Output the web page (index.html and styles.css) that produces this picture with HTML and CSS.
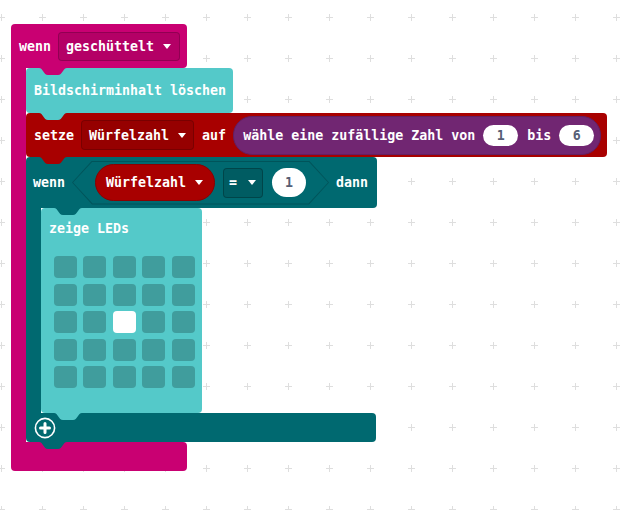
FILE: index.html
```html
<!DOCTYPE html>
<html lang="de">
<head>
    <meta charset="UTF-8">
    <meta name="viewport" content="width=device-width, initial-scale=1.0">
    <title>Würfel</title>
    <link rel="stylesheet" href="styles.css">
</head>
<body>
    <div class="workspace">
        <div class="c-block event">
            <div class="c-head">
                <span class="label">wenn</span>
                <span class="dropdown">geschüttelt<i class="arrow"></i></span>
            </div>
            <div class="c-body">
                <div class="c-arm"></div>
                <div class="stack">
                    <div class="stmt basic">
                        <span class="label">Bildschirminhalt löschen</span>
                    </div>

                    <div class="stmt variables">
                        <span class="label">setze</span>
                        <span class="dropdown">Würfelzahl<i class="arrow"></i></span>
                        <span class="label">auf</span>
                        <div class="reporter math">
                            <span class="label">wähle eine zufällige Zahl von</span>
                            <span class="num">1</span>
                            <span class="label">bis</span>
                            <span class="num">6</span>
                        </div>
                    </div>

                    <div class="stmt c-block logic">
                        <div class="c-head">
                            <span class="label">wenn</span>
                            <div class="hex">
                                <div class="hex-inner">
                                    <span class="var-pill">Würfelzahl<i class="arrow"></i></span>
                                    <span class="dropdown op">=<i class="arrow"></i></span>
                                    <span class="num big">1</span>
                                </div>
                            </div>
                            <span class="label">dann</span>
                        </div>
                        <div class="c-body">
                            <div class="c-arm"></div>
                            <div class="stack">
                                <div class="stmt basic leds-block">
                                    <span class="label">zeige LEDs</span>
                                    <div class="leds">
                                        <span></span><span></span><span></span><span></span><span></span>
                                        <span></span><span></span><span></span><span></span><span></span>
                                        <span></span><span></span><span class="on"></span><span></span><span></span>
                                        <span></span><span></span><span></span><span></span><span></span>
                                        <span></span><span></span><span></span><span></span><span></span>
                                    </div>
                                </div>
                            </div>
                        </div>
                        <div class="c-foot">
                            <svg class="plus" width="22" height="22" viewBox="0 0 22 22">
                                <circle cx="11" cy="11" r="9.6" fill="none" stroke="#fff" stroke-width="1.6"/>
                                <path d="M11 6.5v9M6.5 11h9" stroke="#fff" stroke-width="3" stroke-linecap="round"/>
                            </svg>
                        </div>
                    </div>
                </div>
            </div>
            <div class="c-foot"></div>
        </div>
    </div>
</body>
</html>
```

FILE: styles.css
```css
body {
    margin: 0;
    min-height: 100vh;
    background-color: #fff;
    background-image: url("data:image/svg+xml,%3Csvg xmlns='http://www.w3.org/2000/svg' width='41' height='41'%3E%3Cpath d='M0 3.5h7M3.5 0v7' stroke='%23dedede'/%3E%3C/svg%3E");
    background-position: -2px 14px;
    font-family: "DejaVu Sans Mono", "Liberation Mono", monospace;
    font-size: 13.3px;
    font-weight: bold;
    color: #fff;
}

.workspace {
    padding: 24px 0 0 11px;
}

.label {
    white-space: nowrap;
}

/* block colours */
.event { --c: #c90072; }
.basic { --c: #54c9c9; }
.variables { --c: #a80000; }
.logic { --c: #006970; }
.math { --c: #712672; }

/* C-shaped blocks */
.c-block {
    display: flex;
    flex-direction: column;
    align-items: flex-start;
}

.c-head {
    position: relative;
    display: flex;
    align-items: center;
    gap: 7px;
    padding: 0 7px 0 8px;
    background-color: var(--c);
    border-radius: 4px 4px 4px 0;
}

.c-head::after {
    content: "";
    position: absolute;
    z-index: 1;
    top: 100%;
    left: 28px;
    width: 28px;
    height: 7px;
    background-color: var(--c);
    clip-path: path("M0 0H28C24 0 23.5 7 19 7H9C4.5 7 4 0 0 0Z");
}

.c-body {
    display: flex;
}

.c-arm {
    width: 15px;
    flex-shrink: 0;
    background-color: var(--c);
}

.c-foot {
    display: flex;
    align-items: center;
    height: 29px;
    padding-left: 8px;
    box-sizing: border-box;
    background-color: var(--c);
    border-radius: 0 4px 4px 4px;
}

.event > .c-head { height: 44px; }
.event > .c-foot { width: 176px; }

.logic > .c-head {
    height: 51px;
    padding: 0 9px 0 7px;
}
.logic > .c-foot { width: 350px; }

.stack {
    display: flex;
    flex-direction: column;
    align-items: flex-start;
}

/* statement blocks */
.stmt {
    position: relative;
    display: flex;
    align-items: center;
    gap: 7px;
    height: 45px;
    padding: 0 7px 0 8px;
    box-sizing: border-box;
    background-color: var(--c);
    border-radius: 4px;
}

.stmt::after {
    content: "";
    position: absolute;
    z-index: 1;
    top: 100%;
    left: 13px;
    width: 28px;
    height: 7px;
    background-color: var(--c);
    clip-path: path("M0 0H28C24 0 23.5 7 19 7H9C4.5 7 4 0 0 0Z");
}

.stmt.c-block {
    align-items: flex-start;
    height: auto;
    padding: 0;
    gap: 0;
    background-color: transparent;
}

.variables {
    height: 44px;
    padding-right: 6px;
}

/* fields */
.dropdown {
    display: inline-flex;
    align-items: center;
    gap: 9px;
    height: 29px;
    padding: 0 8px 0 7px;
    box-sizing: border-box;
    background-color: rgba(0, 0, 0, 0.1);
    border: 1px solid rgba(0, 0, 0, 0.2);
    border-radius: 4px;
    white-space: nowrap;
}

.variables > .dropdown {
    height: 30px;
    padding-right: 7px;
    margin-right: 1px;
}

.dropdown.op {
    height: 30px;
    gap: 11px;
    padding: 0 6px 0 5px;
    background-color: rgba(0, 0, 0, 0.12);
    border-color: rgba(0, 0, 0, 0.25);
}

.arrow {
    width: 0;
    height: 0;
    border-left: 4px solid transparent;
    border-right: 4px solid transparent;
    border-top: 5px solid #fff;
}

.reporter {
    display: flex;
    align-items: center;
    gap: 8px;
    height: 37px;
    padding: 0 6px 0 9px;
    background-color: var(--c);
    border: 1px solid #621f63;
    border-radius: 19px;
}

.num {
    display: inline-flex;
    justify-content: center;
    align-items: center;
    width: 35px;
    height: 21px;
    background-color: #fff;
    border-radius: 11px;
    color: #575e75;
}

.reporter .num + .label {
    margin-left: 1px;
}

.num.big {
    width: 34px;
    height: 29px;
    margin-left: 1px;
    border-radius: 15px;
}

/* hexagon condition */
.hex {
    padding: 1px;
    background-color: #00545a;
    clip-path: polygon(20px 0, calc(100% - 20px) 0, 100% 50%, calc(100% - 20px) 100%, 20px 100%, 0 50%);
}

.hex-inner {
    display: flex;
    align-items: center;
    gap: 8px;
    width: 255px;
    height: 42px;
    padding: 0 22px;
    box-sizing: border-box;
    background-color: var(--c);
    clip-path: polygon(19.5px 0, calc(100% - 19.5px) 0, 100% 50%, calc(100% - 19.5px) 100%, 19.5px 100%, 0 50%);
}

.var-pill {
    display: inline-flex;
    align-items: center;
    gap: 9px;
    height: 37px;
    padding: 0 11px 0 10px;
    box-sizing: border-box;
    background-color: #a80000;
    border: 1px solid #8a0000;
    border-radius: 19px;
    white-space: nowrap;
}

/* LED matrix */
.leds-block {
    flex-direction: column;
    align-items: flex-start;
    gap: 0;
    height: auto;
    padding: 12px 7px 25px 8px;
}

.leds-block .label {
    line-height: 17px;
}

.leds {
    display: grid;
    grid-template-columns: repeat(5, 23px);
    grid-auto-rows: 22px;
    column-gap: 6.4px;
    row-gap: 5.5px;
    margin: 19px 0 0 5px;
}

.leds span {
    background-color: #409d9d;
    border-radius: 4px;
}

.leds span.on {
    background-color: #fff;
}

.plus {
    display: block;
}
```
